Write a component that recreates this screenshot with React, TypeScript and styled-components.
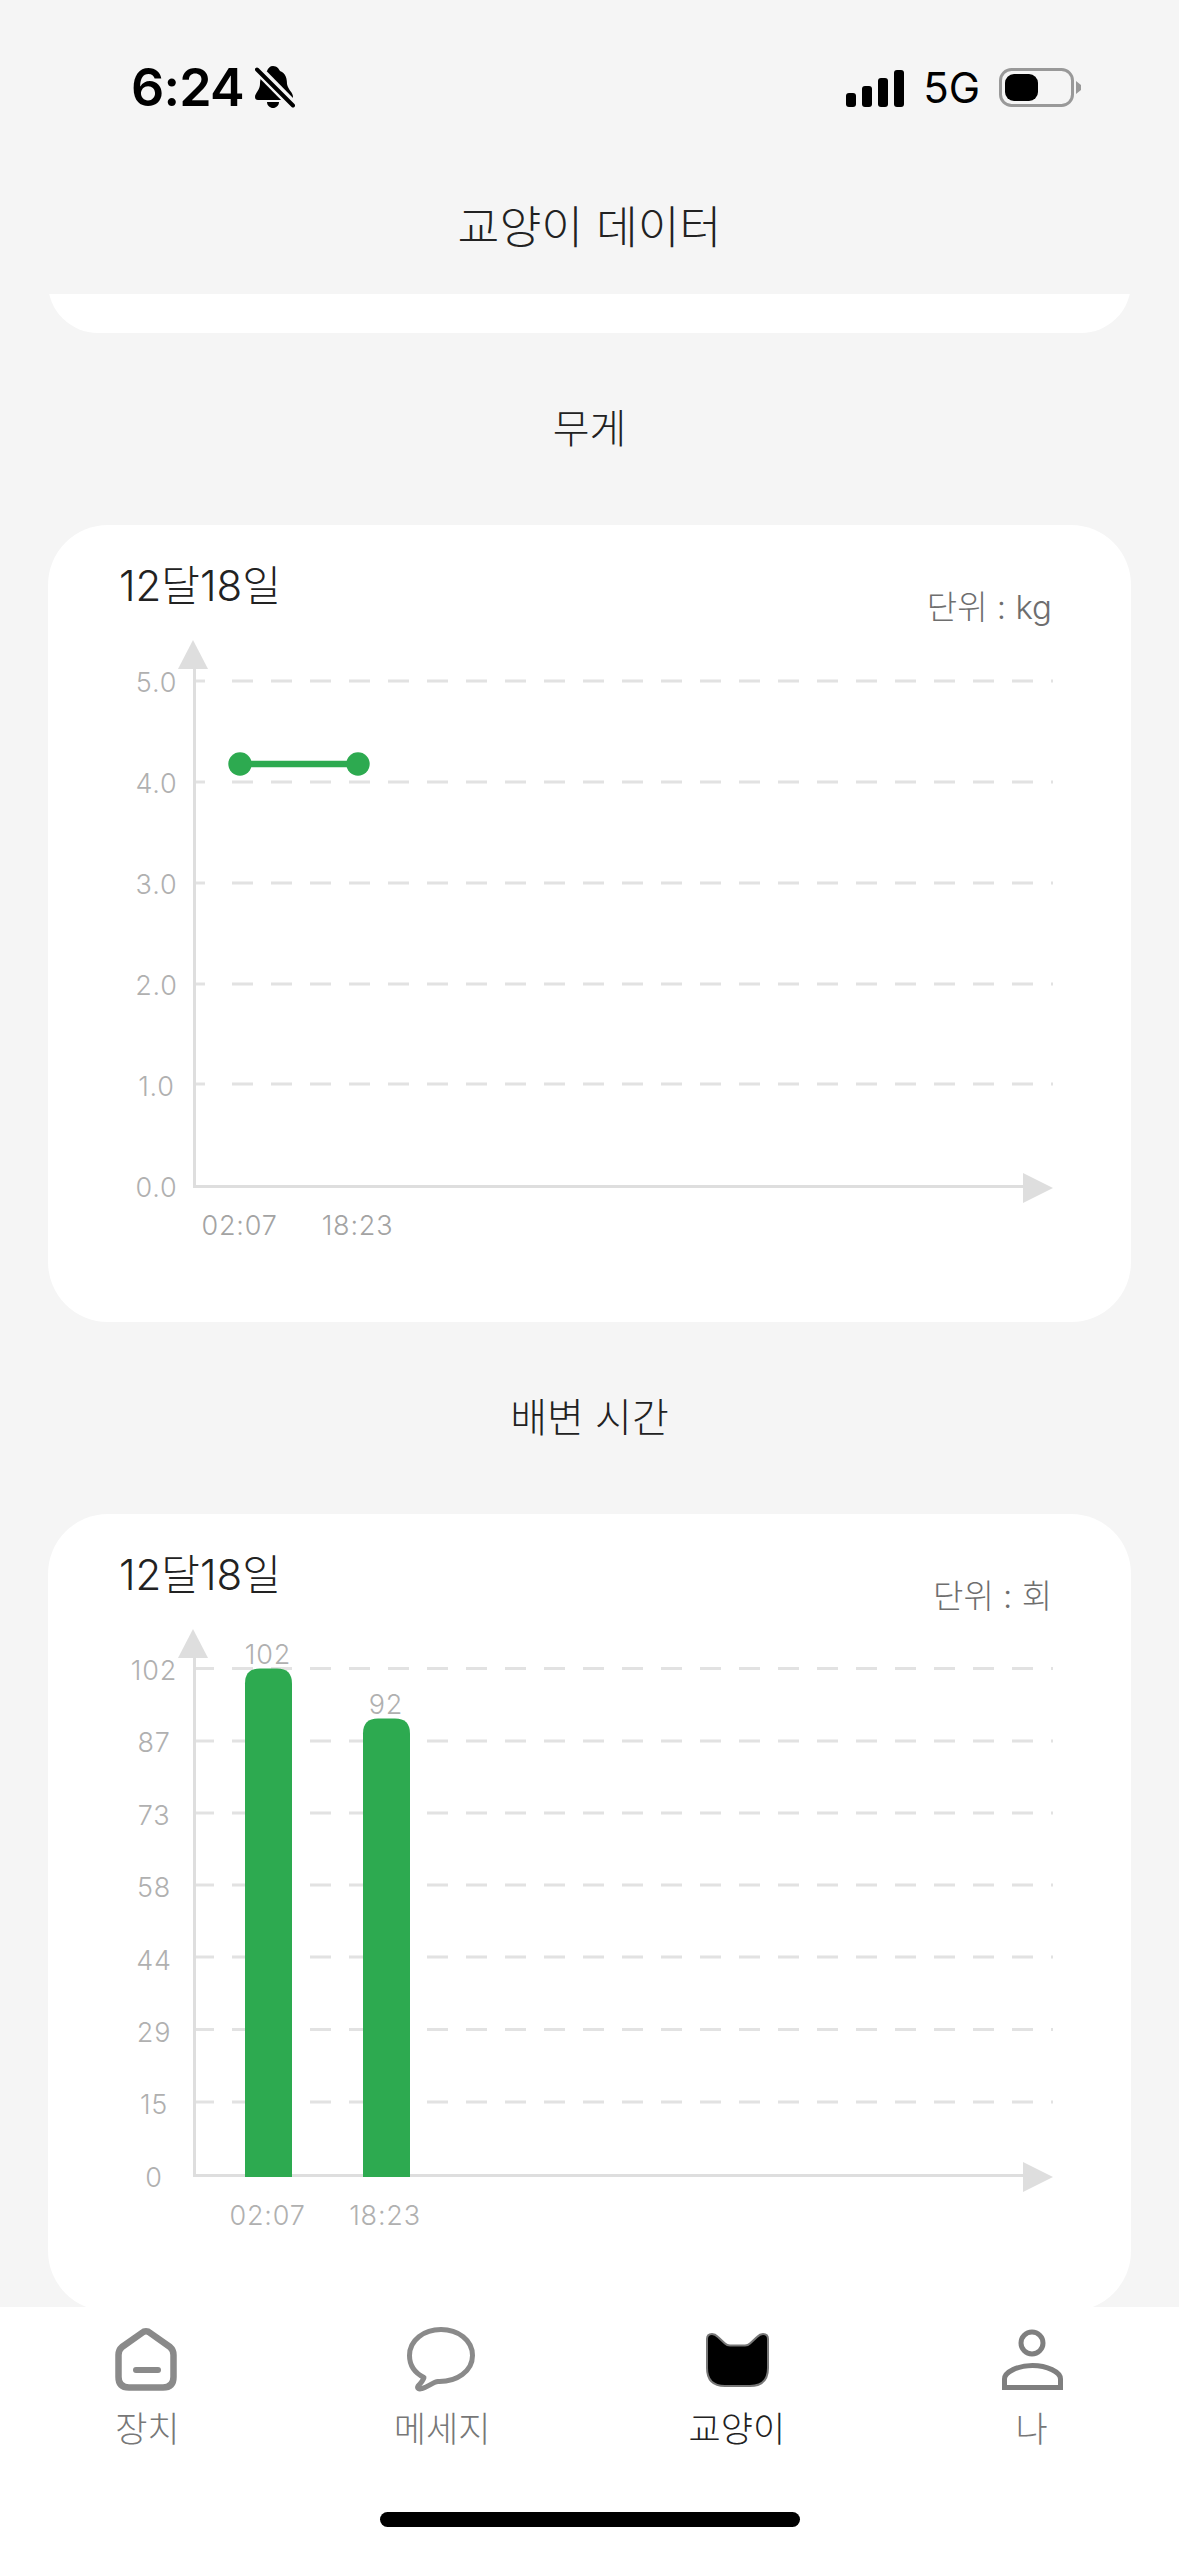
import React from "react";
import styled, { createGlobalStyle } from "styled-components";

const GlobalStyle = createGlobalStyle`
  html, body { margin: 0; padding: 0; background: #f5f5f5; }
  * { box-sizing: border-box; }
`;

const FONT = `Inter, "Noto Sans CJK KR", sans-serif`;
const GREEN = "#2daa50";
const GRID = "#e2e2e2";
const AXIS = "#dedede";

const Page = styled.div`
  width: 1179px;
  height: 2556px;
  display: flex;
  flex-direction: column;
  background: #f5f5f5;
  overflow: hidden;
  font-family: ${FONT};
`;
const TopBar = styled.header`
  height: 294px;
  flex: none;
  display: flex;
  flex-direction: column;
`;
const StatusBar = styled.div`
  height: 176px;
  flex: none;
  display: flex;
  align-items: center;
  justify-content: space-between;
  padding: 0 98px 0 131px;
`;
const StatusGroup = styled.div<{ $gap: number }>`
  display: flex;
  align-items: center;
  gap: ${(p) => p.$gap}px;
`;
const Clock = styled.span`
  font-size: 52px;
  font-weight: 600;
  line-height: 60px;
  letter-spacing: -0.8px;
  color: #000;
`;
const Network = styled.span`
  font-size: 42px;
  font-weight: 400;
  line-height: 50px;
  color: #000;
`;
const Title = styled.h1`
  margin: 0;
  height: 96px;
  display: flex;
  align-items: center;
  justify-content: center;
  font-size: 45.5px;
  font-weight: 300;
  color: #222;
`;
const ScrollArea = styled.main`
  flex: 1;
  min-height: 0;
  overflow: hidden;
`;
const ClippedCard = styled.div`
  height: 100px;
  margin: -61px 48px 0;
  background: #fff;
  border-radius: 60px;
`;
const SectionHeading = styled.h2`
  margin: 0;
  height: 192px;
  padding-bottom: 6px;
  display: flex;
  align-items: center;
  justify-content: center;
  font-size: 40px;
  font-weight: 300;
  color: #222;
`;
const Card = styled.section`
  width: 1083px;
  height: 797px;
  margin: 0 48px;
  background: #fff;
  border-radius: 60px;
  display: flex;
  flex-direction: column;
`;
const CardHeader = styled.div`
  height: 100px;
  flex: none;
  display: flex;
  justify-content: space-between;
  align-items: flex-start;
  padding: 0 79px 0 71px;
`;
const CardDate = styled.div`
  margin-top: 34px;
  font-size: 42px;
  line-height: 54px;
  font-weight: 300;
  color: #222;
`;
const CardUnit = styled.div`
  margin-top: 60px;
  font-size: 33px;
  line-height: 44px;
  font-weight: 300;
  color: #6e6e6e;
`;
const ChartSvg = styled.svg`
  display: block;
  width: 1083px;
  height: 697px;
  flex: none;
`;
const AxisText = styled.text<{ $tone?: string }>`
  font-family: ${FONT};
  font-size: 27px;
  font-weight: 300;
  letter-spacing: 0.8px;
  fill: ${(p) => p.$tone || "#b0b0b0"};
`;
const Nav = styled.nav`
  height: 249px;
  flex: none;
  background: #fff;
  display: flex;
  flex-direction: column;
`;
const NavRow = styled.div`
  display: grid;
  grid-template-columns: repeat(4, 1fr);
  padding-top: 20px;
`;
const NavItem = styled.div`
  display: flex;
  flex-direction: column;
  align-items: center;
`;
const NavIcon = styled.svg`
  display: block;
  width: 70px;
  height: 66px;
`;
const NavLabel = styled.span<{ $active?: boolean }>`
  margin-top: 14px;
  font-size: 35px;
  line-height: 44px;
  font-weight: 300;
  color: ${(p) => (p.$active ? "#222" : "#777")};
`;
const HomeIndicator = styled.div`
  width: 420px;
  height: 15px;
  margin: 61px auto 0;
  border-radius: 8px;
  background: #000;
`;

const Bell = () => (
  <svg width="40" height="44" viewBox="0 0 40 44" aria-hidden>
    <path d="M18 0C22 0 24 3 25 5C31 7 32 13 32 18C33 24 38 26 38 31Q38 34 35 34H3Q0 34 0 31C0 27 5 24 5 18C5 13 7 7 12 5C13 2 15 0 18 0Z" fill="#000" />
    <path d="M12 36H24C24 39.5 21 42 18 42C15 42 12 39.5 12 36Z" fill="#000" />
    <path d="M2 2.5L38 39" stroke="#f5f5f5" strokeWidth="10" />
    <path d="M2 3.5L38 39.5" stroke="#000" strokeWidth="4" strokeLinecap="round" />
  </svg>
);

const Signal = () => (
  <svg width="58" height="37" viewBox="0 0 58 37" aria-hidden>
    <rect x="0" y="23" width="10" height="14" rx="3" fill="#000" />
    <rect x="16" y="16" width="10" height="21" rx="3" fill="#000" />
    <rect x="32" y="8" width="10" height="29" rx="3" fill="#000" />
    <rect x="48" y="0" width="10" height="37" rx="3" fill="#000" />
  </svg>
);

const Battery = () => (
  <svg width="82" height="40" viewBox="0 0 82 40" aria-hidden>
    <rect x="1.5" y="1.5" width="72" height="36" rx="11" fill="none" stroke="#999" strokeWidth="3" />
    <rect x="6" y="6" width="33" height="27" rx="9" fill="#000" />
    <path d="M77 13L82 17V22L77 26Z" fill="#999" />
  </svg>
);

type ChartProps = {
  top: number;
  gridYs: number[];
  yLabels: { text: string; x: number; y: number }[];
  leadEnd: number;
  labelTone?: string;
  xLabels: { text: string; x: number; y: number }[];
  children?: React.ReactNode;
};

const Chart = ({ top, gridYs, yLabels, leadEnd, labelTone, xLabels, children }: ChartProps) => {
  const axisY = top + 661.5;
  return (
    <ChartSvg viewBox={`48 ${top + 100} 1083 697`}>
      {gridYs.map((y) => (
        <g key={y} stroke={GRID} strokeWidth="3">
          <line x1="193" x2={leadEnd} y1={y} y2={y} />
          <line x1="232" x2="1053" y1={y} y2={y} strokeDasharray="21 18" />
        </g>
      ))}
      <line x1="194.5" x2="194.5" y1={top + 140} y2={axisY + 1.5} stroke={AXIS} strokeWidth="3" />
      <line x1="193" x2="1030" y1={axisY} y2={axisY} stroke={AXIS} strokeWidth="3" />
      <polygon points={`193,${top + 115} 208,${top + 144} 178,${top + 144}`} fill={AXIS} />
      <polygon points={`1023,${top + 648} 1053,${top + 663} 1023,${top + 678}`} fill={AXIS} />
      {children}
      {yLabels.map((l) => (
        <AxisText key={l.text} x={l.x} y={l.y} textAnchor="middle">{l.text}</AxisText>
      ))}
      {xLabels.map((l) => (
        <AxisText key={l.text} x={l.x} y={l.y} textAnchor="middle" $tone={labelTone}>{l.text}</AxisText>
      ))}
    </ChartSvg>
  );
};

const weightY = [681, 782, 883, 984, 1084];
const weightLabels = ["5.0", "4.0", "3.0", "2.0", "1.0", "0.0"].map((text, i) => ({
  text,
  x: 156.5,
  y: 692 + i * 101,
}));
const countY = [1669.5, 1742, 1814, 1886, 1958, 2030.5, 2103];
const countLabels = ["102", "87", "73", "58", "44", "29", "15", "0"].map((text, i) => ({
  text,
  x: 154,
  y: 1681 + i * 72.4,
}));

const Bar = ({ x, topY, bottomY }: { x: number; topY: number; bottomY: number }) => (
  <path
    d={`M${x} ${bottomY}V${topY + 15}Q${x} ${topY} ${x + 15} ${topY}H${x + 32}Q${x + 47} ${topY} ${x + 47} ${topY + 15}V${bottomY}Z`}
    fill={GREEN}
  />
);

export default function App() {
  return (
    <Page>
      <GlobalStyle />
      <TopBar>
        <StatusBar>
          <StatusGroup $gap={11}>
            <Clock>6:24</Clock>
            <Bell />
          </StatusGroup>
          <StatusGroup $gap={19}>
            <Signal />
            <Network>5G</Network>
            <Battery />
          </StatusGroup>
        </StatusBar>
        <Title>교양이 데이터</Title>
      </TopBar>
      <ScrollArea>
        <ClippedCard />
        <SectionHeading>무게</SectionHeading>
        <Card>
          <CardHeader>
            <CardDate>12달18일</CardDate>
            <CardUnit>단위 : kg</CardUnit>
          </CardHeader>
          <Chart
            top={525}
            gridYs={weightY}
            yLabels={weightLabels}
            leadEnd={205}
            labelTone="#a3a3a3"
            xLabels={[
              { text: "02:07", x: 239.5, y: 1235 },
              { text: "18:23", x: 357.5, y: 1235 },
            ]}
          >
            <line x1="240" x2="358" y1="764" y2="764" stroke={GREEN} strokeWidth="6.5" />
            <circle cx="240" cy="764" r="11.7" fill={GREEN} />
            <circle cx="358" cy="764" r="11.7" fill={GREEN} />
          </Chart>
        </Card>
        <SectionHeading>배변 시간</SectionHeading>
        <Card>
          <CardHeader>
            <CardDate>12달18일</CardDate>
            <CardUnit>단위 : 회</CardUnit>
          </CardHeader>
          <Chart
            top={1515}
            gridYs={countY}
            yLabels={countLabels}
            leadEnd={214}
            xLabels={[
              { text: "02:07", x: 267.5, y: 2226 },
              { text: "18:23", x: 385, y: 2226 },
            ]}
          >
            <Bar x={245} topY={1669.5} bottomY={2178} />
            <Bar x={363} topY={1719.5} bottomY={2178} />
            <AxisText x={268} y={1665} textAnchor="middle">102</AxisText>
            <AxisText x={386} y={1715} textAnchor="middle">92</AxisText>
          </Chart>
        </Card>
      </ScrollArea>
      <Nav>
        <NavRow>
          <NavItem>
            <NavIcon viewBox="0 0 70 66">
              <g transform="translate(3 1)" fill="none" stroke="#8a8a8a" strokeWidth="6.5" strokeLinecap="round" strokeLinejoin="round">
                <path d="M27 4.8a6 6 0 0 1 8 0L55 19Q58.5 22 58.5 27V49Q58.5 59.5 48 59.5H14Q3.5 59.5 3.5 49V27Q3.5 22 7 19Z" />
                <path d="M21 42H43" strokeWidth="6" />
              </g>
            </NavIcon>
            <NavLabel>장치</NavLabel>
          </NavItem>
          <NavItem>
            <NavIcon viewBox="0 0 70 66">
              <path
                d="M31 54.5C50 55 65.5 44 65.5 28.5C65.5 13 51 2.5 34 2.5C17 2.5 2.5 13 2.5 28.5C2.5 38 8 46 17 50.5C16 54 13 57 11 59C9.5 61.5 12 62.5 15 61.5C21 60 26 55 31 54.5Z"
                fill="none"
                stroke="#8a8a8a"
                strokeWidth="5"
                strokeLinejoin="round"
              />
            </NavIcon>
            <NavLabel>메세지</NavLabel>
          </NavItem>
          <NavItem>
            <NavIcon viewBox="0 0 70 66">
              <g transform="translate(4 6)">
                <path
                  d="M1 6Q1 1 6 1Q9 1 12 4L19 10.5Q21 12.5 24 12.5H39Q42 12.5 44 10.5L51 4Q54 1 57 1Q62 1 62 6V35Q62 53 44 53H19Q1 53 1 35Z"
                  fill="#000"
                  stroke="#777"
                  strokeWidth="2"
                />
              </g>
            </NavIcon>
            <NavLabel $active>교양이</NavLabel>
          </NavItem>
          <NavItem>
            <NavIcon viewBox="0 0 70 66">
              <g transform="translate(5 2)" fill="none" stroke="#7f7f7f" strokeWidth="5">
                <circle cx="30" cy="14" r="11" />
                <path d="M2.5 58.5V50C2.5 43 16 36.5 30.5 36.5C45 36.5 58.5 43 58.5 50V58.5Z" />
              </g>
            </NavIcon>
            <NavLabel>나</NavLabel>
          </NavItem>
        </NavRow>
        <HomeIndicator />
      </Nav>
    </Page>
  );
}
